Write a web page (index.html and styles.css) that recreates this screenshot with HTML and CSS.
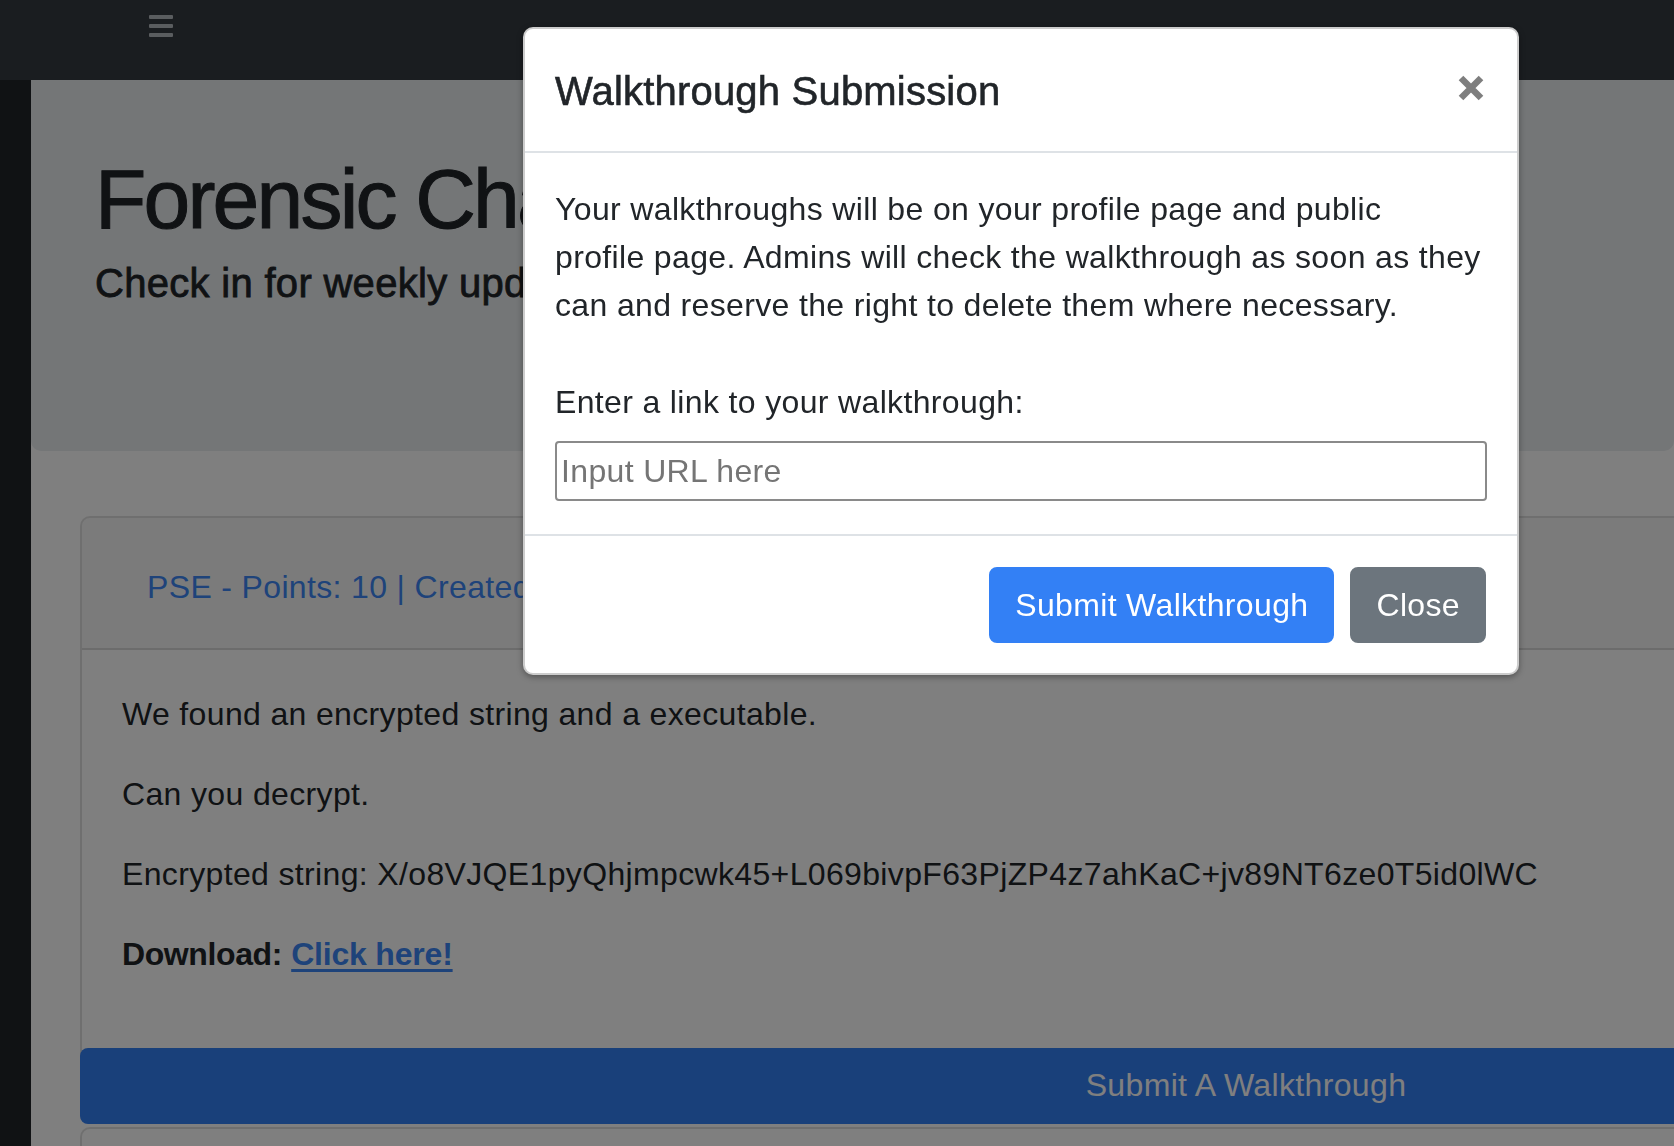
FILE: index.html
```html
<!DOCTYPE html>
<html lang="en">
<head>
<meta charset="utf-8">
<title>Forensic Challenges</title>
<link rel="stylesheet" href="styles.css">
</head>
<body>
<nav class="navbar">
  <button class="toggler" aria-label="Toggle navigation">
    <span class="bar"></span><span class="bar"></span><span class="bar"></span>
  </button>
</nav>
<div class="layout">
  <aside class="sidebar"></aside>
  <main class="main">
    <section class="jumbotron">
      <h1 class="display">Forensic Challenges</h1>
      <h5 class="lead">Check in for weekly updates!</h5>
    </section>
    <div class="cards">
      <div class="card">
        <div class="card-header">
          <a class="challenge-link" href="#">PSE - Points: 10 | Created by: admin</a>
        </div>
        <div class="card-body">
          <p>We found an encrypted string and a executable.</p>
          <p>Can you decrypt.</p>
          <p>Encrypted string: X/o8VJQE1pyQhjmpcwk45+L069bivpF63PjZP4z7ahKaC+jv89NT6ze0T5id0lWC</p>
          <p><strong class="dl-label">Download:</strong> <a class="dl-link" href="#">Click here!</a></p>
        </div>
        <button class="btn-walk">Submit A Walkthrough</button>
      </div>
      <div class="card card-next"></div>
    </div>
  </main>
</div>
<div class="backdrop"></div>
<div class="modal" role="dialog">
  <div class="modal-header">
    <h5 class="modal-title">Walkthrough Submission</h5>
    <button class="close" aria-label="Close">
      <svg width="26" height="26" viewBox="0 0 26 26"><path d="M3 3 L23 23 M23 3 L3 23" stroke="#000" stroke-width="6.5" fill="none"/></svg>
    </button>
  </div>
  <div class="modal-body">
    <p>Your walkthroughs will be on your profile page and public<br>profile page. Admins will check the walkthrough as soon as they can and reserve the right to delete them where necessary.</p>
    <label class="field-label" for="url">Enter a link to your walkthrough:</label>
    <input id="url" class="url-input" type="text" placeholder="Input URL here">
  </div>
  <div class="modal-footer">
    <button class="btn btn-primary">Submit Walkthrough</button>
    <button class="btn btn-secondary">Close</button>
  </div>
</div>
</body>
</html>
```

FILE: styles.css
```css
* { box-sizing: border-box; }
html, body {
  margin: 0;
  padding: 0;
  overflow: hidden;
  height: 100%;
}
body {
  font-family: "Liberation Sans", Arial, sans-serif;
  font-size: 32px;
  line-height: 48px;
  color: #212529;
  background: #ffffff;
  letter-spacing: 0.35px;
}

/* navbar */
.navbar {
  height: 80px;
  background: #343a40;
  display: flex;
  align-items: flex-start;
  padding: 15px 0 0 149px;
}
.toggler {
  display: flex;
  flex-direction: column;
  gap: 5px;
  background: none;
  border: 0;
  padding: 0;
}
.bar {
  display: block;
  width: 24px;
  height: 4px;
  background: #b4babf;
  border-radius: 1px;
}

/* layout */
.layout {
  display: flex;
  min-height: calc(100% - 80px);
}
.sidebar {
  width: 31px;
  flex: 0 0 31px;
  background: #212529;
}
.main {
  flex: 1;
  min-width: 0;
}

.jumbotron {
  background: #e9ecef;
  padding: 69px 60px 144px 64px;
  border-radius: 0 0 10px 10px;
}
.display {
  margin: 0 0 9px;
  font-size: 84px;
  line-height: 1.2;
  font-weight: 400;
  letter-spacing: -2.8px;
  -webkit-text-stroke: 1px #212529;
}
.lead {
  margin: 0;
  font-size: 40px;
  line-height: 48px;
  font-weight: 400;
  -webkit-text-stroke: 0.8px #212529;
  letter-spacing: 0.3px;
}

.cards {
  padding: 65px 0 0 49px;
}
.card {
  width: 2332px;
  background: #fff;
  border: 2px solid rgba(0, 0, 0, 0.125);
  border-radius: 10px;
}
.card-header {
  background: rgba(0, 0, 0, 0.03);
  border-bottom: 2px solid rgba(0, 0, 0, 0.125);
  padding: 45px 0 37px 65px;
  border-radius: 8px 8px 0 0;
}
.challenge-link {
  color: #3d86f5;
  text-decoration: none;
}
.card-body {
  padding: 40px 40px 38px;
}
.card-body p {
  margin: 0 0 32px;
}
.dl-label {
  letter-spacing: -0.4px;
}
.dl-link {
  color: #3d86f5;
  font-weight: 700;
  letter-spacing: -0.2px;
  text-decoration: underline;
  text-decoration-thickness: 3px;
  text-underline-offset: 4px;
}
.btn-walk {
  display: block;
  width: calc(100% + 4px);
  margin: 0 -2px -2px;
  height: 76px;
  border: 0;
  border-radius: 8px;
  background: #3380f5;
  color: #ffffff;
  font-family: inherit;
  font-size: 32px;
  letter-spacing: 0.35px;
  text-align: center;
}
.card-next {
  margin-top: 3px;
  height: 120px;
}

/* backdrop + modal */
.backdrop {
  position: fixed;
  inset: 0;
  background: rgba(0, 0, 0, 0.5);
  z-index: 1040;
}
.modal {
  position: absolute;
  left: 523px;
  top: 27px;
  width: 996px;
  z-index: 1050;
  background: #fff;
  border: 2px solid rgba(0, 0, 0, 0.2);
  border-radius: 10px;
  box-shadow: 0 2px 6px rgba(0, 0, 0, 0.35);
}
.modal-header {
  display: flex;
  align-items: flex-start;
  justify-content: space-between;
  padding: 32px 32px 30px 30px;
  border-bottom: 2px solid #dee2e6;
}
.modal-title {
  margin: 0;
  font-size: 40px;
  line-height: 60px;
  font-weight: 400;
  letter-spacing: 0.2px;
  -webkit-text-stroke: 0.6px #212529;
}
.close {
  background: none;
  border: 0;
  padding: 0;
  margin-top: 14px;
  margin-right: 1px;
  opacity: 0.5;
  line-height: 0;
}
.modal-body {
  padding: 32px 32px 33px 30px;
}
.modal-body p {
  margin: 0 0 49px;
}
.field-label {
  display: block;
  margin-bottom: 15px;
}
.url-input {
  display: block;
  width: calc(100% + 2px);
  height: 60px;
  border: 2px solid #8a8a8a;
  border-radius: 4px;
  padding: 0 4px;
  font-family: inherit;
  font-size: 32px;
  letter-spacing: 0.35px;
  color: #212529;
}
.url-input::placeholder {
  color: #757575;
}
.modal-footer {
  display: flex;
  justify-content: flex-end;
  gap: 16px;
  padding: 31px 31px 30px;
  border-top: 2px solid #dee2e6;
}
.btn {
  height: 76px;
  padding: 0 24px;
  border: 2px solid transparent;
  border-radius: 8px;
  font-family: inherit;
  font-size: 32px;
  line-height: 48px;
  letter-spacing: 0.35px;
  color: #fff;
}
.btn-primary {
  background: #3380f5;
  border-color: #3380f5;
}
.btn-secondary {
  background: #6c757d;
  border-color: #6c757d;
}
```
